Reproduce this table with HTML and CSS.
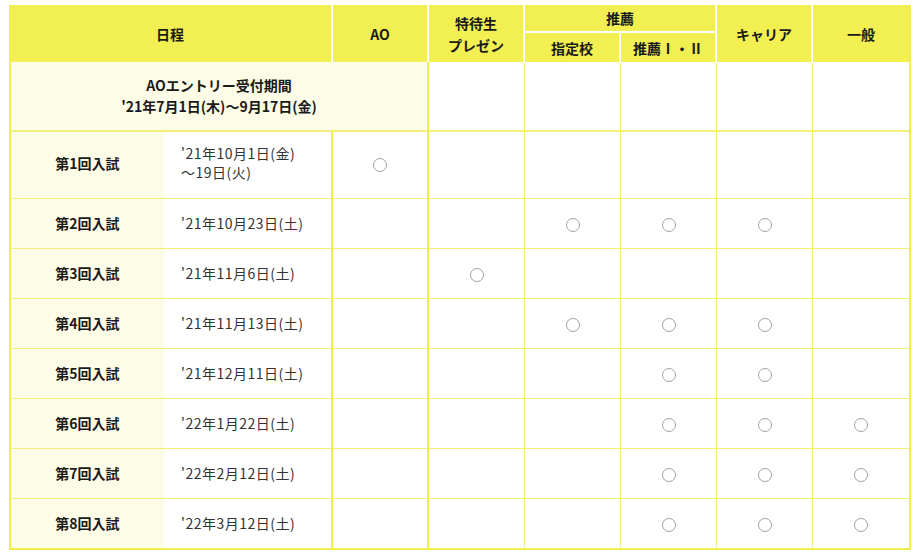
FILE: index.html
```html
<!DOCTYPE html>
<html lang="ja">
<head>
<meta charset="utf-8">
<link rel="stylesheet" href="styles.css">
</head>
<body>
<div class="wrap">
<table class="sched">
  <colgroup>
    <col class="c-label"><col class="c-date"><col class="c-n"><col class="c-n"><col class="c-n"><col class="c-n"><col class="c-n"><col class="c-n">
  </colgroup>
  <thead>
    <tr class="h1">
      <th colspan="2" rowspan="2">日程</th>
      <th rowspan="2">AO</th>
      <th rowspan="2">特待生<br>プレゼン</th>
      <th colspan="2" class="group">推薦</th>
      <th rowspan="2">キャリア</th>
      <th rowspan="2" class="last">一般</th>
    </tr>
    <tr class="h2">
      <th>指定校</th>
      <th>推薦Ⅰ・Ⅱ</th>
    </tr>
  </thead>
  <tbody>
    <tr class="r-ao">
      <td colspan="3" class="label ao">AOエントリー受付期間<br>'21年7月1日(木)～9月17日(金)</td>
      <td></td><td></td><td></td><td></td><td class="last"></td>
    </tr>
    <tr class="r-tall">
      <td class="label">第1回入試</td>
      <td class="date">'21年10月1日(金)<br>～19日(火)</td>
      <td class="strong-r"><span class="mark"></span></td><td></td><td></td><td></td><td></td><td class="last"></td>
    </tr>
    <tr>
      <td class="label">第2回入試</td>
      <td class="date">'21年10月23日(土)</td>
      <td class="strong-r"></td><td></td><td><span class="mark"></span></td><td><span class="mark"></span></td><td><span class="mark"></span></td><td class="last"></td>
    </tr>
    <tr>
      <td class="label">第3回入試</td>
      <td class="date">'21年11月6日(土)</td>
      <td class="strong-r"></td><td><span class="mark"></span></td><td></td><td></td><td></td><td class="last"></td>
    </tr>
    <tr>
      <td class="label">第4回入試</td>
      <td class="date">'21年11月13日(土)</td>
      <td class="strong-r"></td><td></td><td><span class="mark"></span></td><td><span class="mark"></span></td><td><span class="mark"></span></td><td class="last"></td>
    </tr>
    <tr>
      <td class="label">第5回入試</td>
      <td class="date">'21年12月11日(土)</td>
      <td class="strong-r"></td><td></td><td></td><td><span class="mark"></span></td><td><span class="mark"></span></td><td class="last"></td>
    </tr>
    <tr>
      <td class="label">第6回入試</td>
      <td class="date">'22年1月22日(土)</td>
      <td class="strong-r"></td><td></td><td></td><td><span class="mark"></span></td><td><span class="mark"></span></td><td class="last"><span class="mark"></span></td>
    </tr>
    <tr>
      <td class="label">第7回入試</td>
      <td class="date">'22年2月12日(土)</td>
      <td class="strong-r"></td><td></td><td></td><td><span class="mark"></span></td><td><span class="mark"></span></td><td class="last"><span class="mark"></span></td>
    </tr>
    <tr class="r-last">
      <td class="label">第8回入試</td>
      <td class="date">'22年3月12日(土)</td>
      <td class="strong-r"></td><td></td><td></td><td><span class="mark"></span></td><td><span class="mark"></span></td><td class="last"><span class="mark"></span></td>
    </tr>
  </tbody>
</table>
</div>
</body>
</html>
```

FILE: styles.css
```css
html, body {
  margin: 0;
  padding: 0;
  background: #fff;
}
.wrap {
  padding: 5px 0 0 9px;
}
.sched {
  width: 899px;
  table-layout: fixed;
  border-collapse: separate;
  border-spacing: 0;
  border: 2px solid #f1ee4c;
  border-top: 0;
  border-left: 0;
  font-family: "Noto Sans CJK JP", "Noto Sans", sans-serif;
  font-size: 14px;
  color: #222;
}
.c-label { width: 155px; }
.c-date { width: 169px; }
.c-n { width: 96px; }
.sched th {
  background: #f1ef52;
  font-weight: bold;
  color: #1a1a1a;
  text-align: center;
  vertical-align: middle;
  line-height: 22px;
  padding: 0;
  border-right: 2px solid #fff;
}
.sched th.last { border-right: 0; }
.h1 th { height: 28px; }
.h1 th.group { border-bottom: 2px solid #fff; height: 26px; }
.h2 th { height: 29px; }
.sched td {
  border-right: 1px solid #f3f07a;
  border-bottom: 1px solid #f3f07a;
  text-align: center;
  vertical-align: middle;
  padding: 0;
  height: 49px;
  line-height: 21px;
}
.sched td.last { border-right: 0; }
.sched td.strong-r { border-right: 2px solid #f1ee4c; }
.sched tr > td:first-child { border-left: 2px solid #f1ee4c; }
.sched tbody tr:last-child td { border-bottom: 0; }
.sched .r-ao td { height: 68px; border-bottom-width: 2px; }
.sched .r-tall td { height: 66px; padding-bottom: 0; }
.sched .r-last td { height: 49px; }
.sched td.label {
  background: #fdfce6;
  font-weight: bold;
  color: #1a1a1a;
  border-right: 0;
}
.sched td.ao {
  border-right: 2px solid #f1ee4c;
  line-height: 21px;
}
.sched td.date {
  text-align: left;
  padding-left: 17px;
  letter-spacing: 0.5px;
  line-height: 19px;
  color: #333;
  border-right: 2px solid #f1ee4c;
}
.sched .r-tall td.label,
.sched .r-tall td.date,
.sched .r-tall td.strong-r { padding-bottom: 4px; height: 62px; }
.mark {
  display: inline-block;
  width: 12px;
  height: 12px;
  border: 1.3px solid #a3a3a3;
  border-radius: 50%;
  vertical-align: middle;
}
```
